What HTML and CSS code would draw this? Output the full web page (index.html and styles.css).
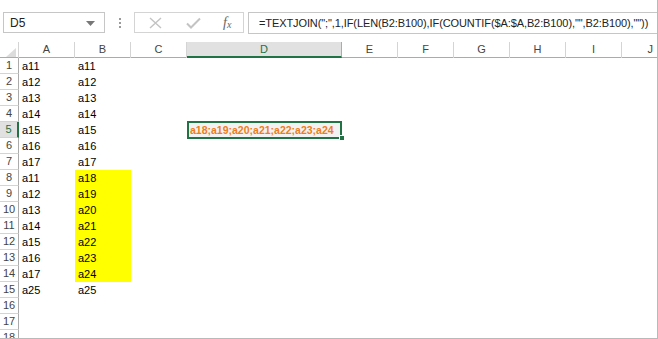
FILE: index.html
```html
<!DOCTYPE html>
<html>
<head>
<meta charset="utf-8">
<link rel="stylesheet" href="styles.css">
</head>
<body>
<div class="app">
  <div class="fbar">
    <div class="namebox"><span>D5</span><svg class="dd" width="9" height="5" viewBox="0 0 9 5"><path d="M0 0H9L4.5 5Z" fill="#777"/></svg></div>
    <div class="dots"><i></i><i></i><i></i></div>
    <div class="btns">
      <svg class="ic" width="13" height="12" viewBox="0 0 13 12"><path d="M1 1L12 11M12 1L1 11" stroke="#c3c3c3" stroke-width="1.4" fill="none"/></svg>
      <svg class="ic" width="15" height="12" viewBox="0 0 15 12"><path d="M1 6.5L5 10.5L14 1.5" stroke="#c3c3c3" stroke-width="2" fill="none"/></svg>
      <span class="fx">f<sub>x</sub></span>
    </div>
    <div class="formula">=TEXTJOIN(";",1,IF(LEN(B2:B100),IF(COUNTIF($A:$A,B2:B100),"",B2:B100),""))</div>
  </div>
  <div class="sheet">
    <div class="hrow">
      <div class="corner"><svg width="10" height="9" viewBox="0 0 10 9"><path d="M10 0V9H0Z" fill="#dcdcdc"/></svg></div>
      <div class="ch">A</div><div class="ch">B</div><div class="ch">C</div><div class="ch sel">D</div><div class="ch">E</div><div class="ch">F</div><div class="ch">G</div><div class="ch">H</div><div class="ch">I</div><div class="ch last">J</div>
    </div>
    <div class="row"><div class="rh">1</div><div class="c">a11</div><div class="c">a11</div></div>
    <div class="row"><div class="rh">2</div><div class="c">a12</div><div class="c">a12</div></div>
    <div class="row"><div class="rh">3</div><div class="c">a13</div><div class="c">a13</div></div>
    <div class="row"><div class="rh">4</div><div class="c">a14</div><div class="c">a14</div></div>
    <div class="row"><div class="rh sel">5</div><div class="c">a15</div><div class="c">a15</div><div class="c"></div><div class="c d5"><span class="res">a18;a19;a20;a21;a22;a23;a24</span><div class="selbox"></div><div class="handle"></div></div></div>
    <div class="row"><div class="rh">6</div><div class="c">a16</div><div class="c">a16</div></div>
    <div class="row"><div class="rh">7</div><div class="c">a17</div><div class="c">a17</div></div>
    <div class="row"><div class="rh">8</div><div class="c">a11</div><div class="c y">a18</div></div>
    <div class="row"><div class="rh">9</div><div class="c">a12</div><div class="c y">a19</div></div>
    <div class="row"><div class="rh">10</div><div class="c">a13</div><div class="c y">a20</div></div>
    <div class="row"><div class="rh">11</div><div class="c">a14</div><div class="c y">a21</div></div>
    <div class="row"><div class="rh">12</div><div class="c">a15</div><div class="c y">a22</div></div>
    <div class="row"><div class="rh">13</div><div class="c">a16</div><div class="c y">a23</div></div>
    <div class="row"><div class="rh">14</div><div class="c">a17</div><div class="c y">a24</div></div>
    <div class="row"><div class="rh">15</div><div class="c">a25</div><div class="c">a25</div></div>
    <div class="row"><div class="rh">16</div></div>
    <div class="row"><div class="rh">17</div></div>
    <div class="row"><div class="rh">18</div></div>
  </div>
</div>
</body>
</html>
```

FILE: styles.css
```css
* { box-sizing: border-box; }
html, body { margin: 0; padding: 0; background: #fff; }
body { font-family: "Liberation Sans", Arial, sans-serif; font-size: 11px; color: #000; }
.app {
  width: 658px; height: 339px; overflow: hidden;
  border-right: 1px solid #b9b9b9; border-bottom: 1px solid #b9b9b9;
  background: #fff;
}
.fbar {
  height: 42px; display: flex; align-items: flex-start; padding-top: 12px;
}
.namebox {
  margin-left: 3px; width: 102px; height: 21px; border: 1px solid #c6c6c6;
  display: flex; align-items: center; justify-content: space-between;
  padding: 0 9px 0 6px; font-size: 12px; color: #222;
}
.dd { margin-top: 1px; }
.dots { width: 29px; height: 21px; display: flex; flex-direction: column; align-items: center; justify-content: center; gap: 2px; }
.dots i { width: 2px; height: 2px; background: #9a9a9a; display: block; }
.btns {
  width: 110px; height: 21px; border: 1px solid #d4d4d4;
  display: flex; align-items: center; padding-left: 14px;
}
.btns .ic:nth-child(2) { margin-left: 24px; }
.fx { margin-left: 22px; font-family: "Liberation Serif", serif; font-style: italic; font-size: 14px; color: #666; line-height: 1; }
.fx sub { font-size: 10px; vertical-align: -1px; }
.formula {
  margin-left: 4px; flex: 1; height: 22px; border: 1px solid #c6c6c6; border-right: none;
  padding: 0 0 0 10px; display: flex; align-items: center; white-space: nowrap; font-size: 11px; color: #222;
  letter-spacing: -0.1px;
}
.hrow, .row {
  display: grid;
  grid-template-columns: 19px 56px 56px 56px 155px 56px 56px 56px 56px 56px 1fr;
}
.hrow { height: 16px; border-bottom: 1px solid #ababab; }
.corner { border-right: 1px solid #d4d4d4; display: flex; align-items: flex-end; justify-content: flex-end; padding: 0 2px 1px 0; }
.ch {
  border-right: 1px solid #d4d4d4; text-align: center; color: #444; font-size: 11px; line-height: 15px;
}
.ch.sel { background: #e1e1e1; border-bottom: 2px solid #217346; color: #217346; line-height: 14px; border-right-color: #ababab; }
.ch.last { border-right: none; text-align: right; padding-right: 4px; }
.row { height: 16px; }
.rh {
  border-right: 1px solid #ababab; border-bottom: 1px solid #d4d4d4;
  text-align: center; color: #444; line-height: 15px; font-size: 11px;
}
.rh.sel { background: #e1e1e1; border-right: 2px solid #217346; color: #217346; }
.c { padding-left: 3px; line-height: 16px; white-space: nowrap; }
.c.y { background: #ffff00; }
.d5 { position: relative; background: #f2f2f2; }
.res { color: #f07d19; font-weight: bold; font-size: 10.5px; }
.selbox { position: absolute; left: 0; top: -1px; right: 0; bottom: -1px; border: 2px solid #217346; }
.handle { position: absolute; right: -3px; bottom: -3px; width: 6px; height: 6px; background: #217346; border: 1px solid #fff; }
```
